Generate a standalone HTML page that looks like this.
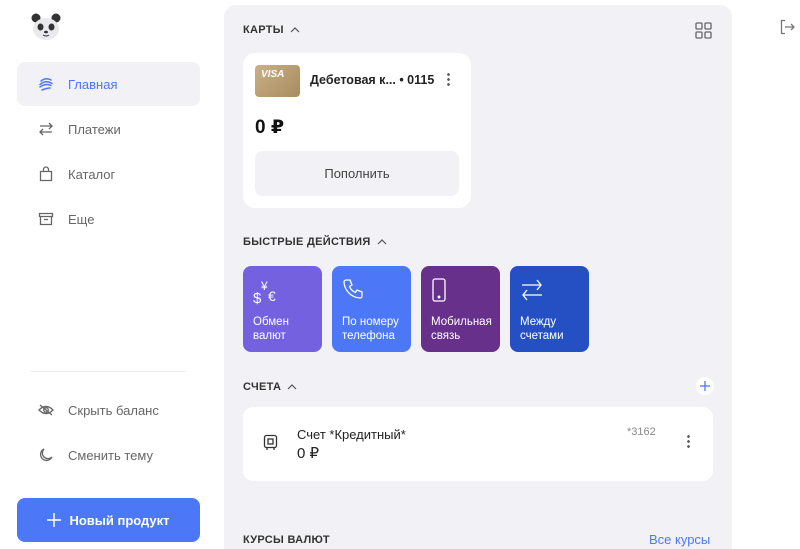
<!DOCTYPE html>
<html><head><meta charset="utf-8"><style>
*{margin:0;padding:0;box-sizing:border-box}
html,body{width:800px;height:549px;overflow:hidden}
body{background:#fff;font-family:"Liberation Sans","DejaVu Sans",sans-serif;position:relative;color:#222}
.abs{position:absolute}
.nav{position:absolute;left:17px;width:183px;height:44px;border-radius:8px;display:flex;align-items:center;font-size:13px;color:#666}
.nav svg{position:absolute;left:21px}
.nav span{position:absolute;left:51px}
.main{position:absolute;left:224px;top:5px;width:508px;height:544px;background:#f1f1f6;border-radius:12px 12px 0 0}
.h{position:absolute;font-size:11px;font-weight:bold;color:#333;letter-spacing:.3px;display:flex;align-items:center;gap:6px}
.tile{position:absolute;top:266px;width:79px;height:86px;border-radius:8px;color:#fff;font-size:11.5px;line-height:14px}
.tile svg{position:absolute;left:10px;top:12px}
.tile div{position:absolute;left:10px;top:49px}
</style></head><body>
<svg class="abs" style="left:31px;top:13px" width="30" height="28" viewBox="0 0 30 28">
<circle cx="5" cy="5" r="4.5" fill="#333"/><circle cx="25" cy="5" r="4.5" fill="#333"/>
<ellipse cx="15" cy="16" rx="13" ry="11" fill="#e9e9ee"/>
<ellipse cx="9.5" cy="14" rx="3" ry="3.5" fill="#333"/><ellipse cx="20.5" cy="14" rx="3" ry="3.5" fill="#333"/>
<ellipse cx="15" cy="19" rx="2" ry="1.3" fill="#333"/><path d="M12 22q3 2 6 0" stroke="#333" fill="none"/>
</svg>
<div class="nav" style="top:62px;background:#f1f1f6;color:#4b77f7">
<svg width="16" height="16" viewBox="0 0 16 16" fill="none" stroke="#4b77f7" stroke-width="1.5" stroke-linecap="round"><path d="M3 5q5-4 10-1M2 8.5q6-5 12-1M2 11q6-4 11-1.5M4 14q5-2 8-2"/></svg>
<span>Главная</span></div>
<div class="nav" style="top:107px">
<svg width="16" height="16" viewBox="0 0 16 16" fill="none" stroke="#666" stroke-width="1.3"><path d="M2 5h12M11 2l3 3-3 3M14 11H2M5 8l-3 3 3 3"/></svg><span>Платежи</span></div>
<div class="nav" style="top:152px">
<svg width="16" height="16" viewBox="0 0 16 16" fill="none" stroke="#666" stroke-width="1.3"><path d="M2.5 5.5h11v9h-11zM5.5 5.5V3.5a2.5 2.5 0 0 1 5 0v2"/></svg><span>Каталог</span></div>
<div class="nav" style="top:197px">
<svg width="16" height="16" viewBox="0 0 16 16" fill="none" stroke="#666" stroke-width="1.3"><path d="M1.5 2.5h13v3h-13zM2.5 5.5v8h11v-8M6 8.5h4"/></svg><span>Еще</span></div>
<div class="abs" style="left:30px;top:371px;width:157px;height:1px;background:#eee"></div>
<div class="nav" style="top:388px">
<svg width="16" height="16" viewBox="0 0 16 16" fill="none" stroke="#666" stroke-width="1.3"><path d="M1 8q7-7 14 0q-7 7-14 0zM2 3l12 10"/><circle cx="8" cy="8" r="2.3"/></svg><span>Скрыть баланс</span></div>
<div class="nav" style="top:433px">
<svg width="16" height="16" viewBox="0 0 16 16" fill="none" stroke="#666" stroke-width="1.3"><path d="M6 2a6 6 0 1 0 8 8a5.5 5.5 0 0 1-8-8z"/></svg><span>Сменить тему</span></div>
<div class="abs" style="left:17px;top:498px;width:183px;height:44px;border-radius:8px;background:#4c78f7;color:#fff;font-size:13px;font-weight:bold;display:flex;align-items:center;justify-content:center;gap:8px">
<svg width="14" height="14" viewBox="0 0 14 14" stroke="#fff" stroke-width="1.5"><path d="M7 0v14M0 7h14"/></svg>Новый продукт</div>

<div class="main"></div>
<div class="h" style="left:243px;top:24px">КАРТЫ <svg width="10" height="6" viewBox="0 0 10 6" fill="none" stroke="#555" stroke-width="1.2"><path d="M1 5l4-4 4 4"/></svg></div>
<svg class="abs" style="left:695px;top:22px" width="17" height="17" viewBox="0 0 17 17" fill="none" stroke="#666" stroke-width="1.3"><rect x="1" y="1" width="6" height="6" rx="1"/><rect x="10" y="1" width="6" height="6" rx="1"/><rect x="1" y="10" width="6" height="6" rx="1"/><rect x="10" y="10" width="6" height="6" rx="1"/></svg>
<svg class="abs" style="left:779px;top:19px" width="16" height="16" viewBox="0 0 16 16" fill="none" stroke="#777" stroke-width="1.3"><path d="M6 1.5H2.5v13H6M6 8h9M12 5l3 3-3 3"/></svg>

<div class="abs" style="left:243px;top:53px;width:228px;height:155px;background:#fff;border-radius:12px"></div>
<div class="abs" style="left:255px;top:65px;width:45px;height:32px;border-radius:4px;background:linear-gradient(135deg,#c9b087,#a88c5e);color:#fff;font-size:10px;font-weight:bold;font-style:italic;padding:4px 0 0 6px">VISA</div>
<div class="abs" style="left:310px;top:73px;font-size:12.5px;font-weight:bold;color:#222">Дебетовая к... • 0115</div>
<div class="abs" style="left:447px;top:72px;width:3px;height:15px;background:radial-gradient(circle,#555 1.2px,transparent 1.5px) 0 0/3px 5px"></div>
<div class="abs" style="left:255px;top:116px;font-size:19px;font-weight:bold;color:#111">0 ₽</div>
<div class="abs" style="left:255px;top:151px;width:204px;height:45px;border-radius:8px;background:#f1f1f6;font-size:13px;color:#444;display:flex;align-items:center;justify-content:center">Пополнить</div>

<div class="h" style="left:243px;top:236px">БЫСТРЫЕ ДЕЙСТВИЯ <svg width="10" height="6" viewBox="0 0 10 6" fill="none" stroke="#555" stroke-width="1.2"><path d="M1 5l4-4 4 4"/></svg></div>
<div class="tile" style="left:243px;background:#7361e0">
<svg width="28" height="28" viewBox="0 0 28 28"><text x="0" y="25" fill="#fff" font-size="15" font-family="Liberation Sans">$</text><text x="8" y="12" fill="#fff" font-size="12" font-family="Liberation Sans">¥</text><text x="15" y="23" fill="#fff" font-size="14" font-family="Liberation Sans">€</text></svg>
<div>Обмен<br>валют</div></div>
<div class="tile" style="left:332px;background:#4c78f7">
<svg width="24" height="24" viewBox="0 0 24 24" fill="none" stroke="#fff" stroke-width="1.3"><path d="M4 2l4 0 2 5-2.5 1.5a11 11 0 0 0 6 6L15 12l5 2v4a2 2 0 0 1-2 2A17 17 0 0 1 2 4a2 2 0 0 1 2-2z"/></svg>
<div>По номеру<br>телефона</div></div>
<div class="tile" style="left:421px;background:#67308a">
<svg width="24" height="26" viewBox="0 0 24 26" fill="none" stroke="#fff" stroke-width="1.3"><rect x="2" y="1" width="12" height="22" rx="2"/><circle cx="8" cy="19" r=".8" fill="#fff"/></svg>
<div>Мобильная<br>связь</div></div>
<div class="tile" style="left:510px;background:#2550c4">
<svg width="24" height="24" viewBox="0 0 24 24" fill="none" stroke="#fff" stroke-width="1.3"><path d="M2 7h19M17 2l4 5-4 5M22 17H3M7 12l-4 5 4 5"/></svg>
<div>Между<br>счетами</div></div>

<div class="h" style="left:243px;top:381px">СЧЕТА <svg width="10" height="6" viewBox="0 0 10 6" fill="none" stroke="#555" stroke-width="1.2"><path d="M1 5l4-4 4 4"/></svg></div>
<div class="abs" style="left:696px;top:377px;width:18px;height:18px;border-radius:50%;background:#fff"></div>
<svg class="abs" style="left:700px;top:381px" width="10" height="10" viewBox="0 0 10 10" stroke="#4c78f7" stroke-width="1.3"><path d="M5 0v10M0 5h10"/></svg>
<div class="abs" style="left:243px;top:407px;width:470px;height:74px;background:#fff;border-radius:10px"></div>
<svg class="abs" style="left:263px;top:434px" width="16" height="16" viewBox="0 0 16 16" fill="none" stroke="#333" stroke-width="1.3"><rect x="1.5" y="1.5" width="12" height="12" rx="2"/><rect x="5" y="5" width="5" height="5"/><path d="M3 15h2M10 15h2"/></svg>
<div class="abs" style="left:297px;top:427px;font-size:13px;color:#222">Счет *Кредитный*</div>
<div class="abs" style="left:297px;top:444px;font-size:15px;color:#222">0 ₽</div>
<div class="abs" style="left:627px;top:426px;font-size:11px;color:#888">*3162</div>
<div class="abs" style="left:687px;top:434px;width:3px;height:15px;background:radial-gradient(circle,#555 1.2px,transparent 1.5px) 0 0/3px 5px"></div>

<div class="h" style="left:243px;top:534px">КУРСЫ ВАЛЮТ</div>
<div class="abs" style="left:649px;top:532px;font-size:13px;color:#4c78f7">Все курсы</div>
</body></html>
